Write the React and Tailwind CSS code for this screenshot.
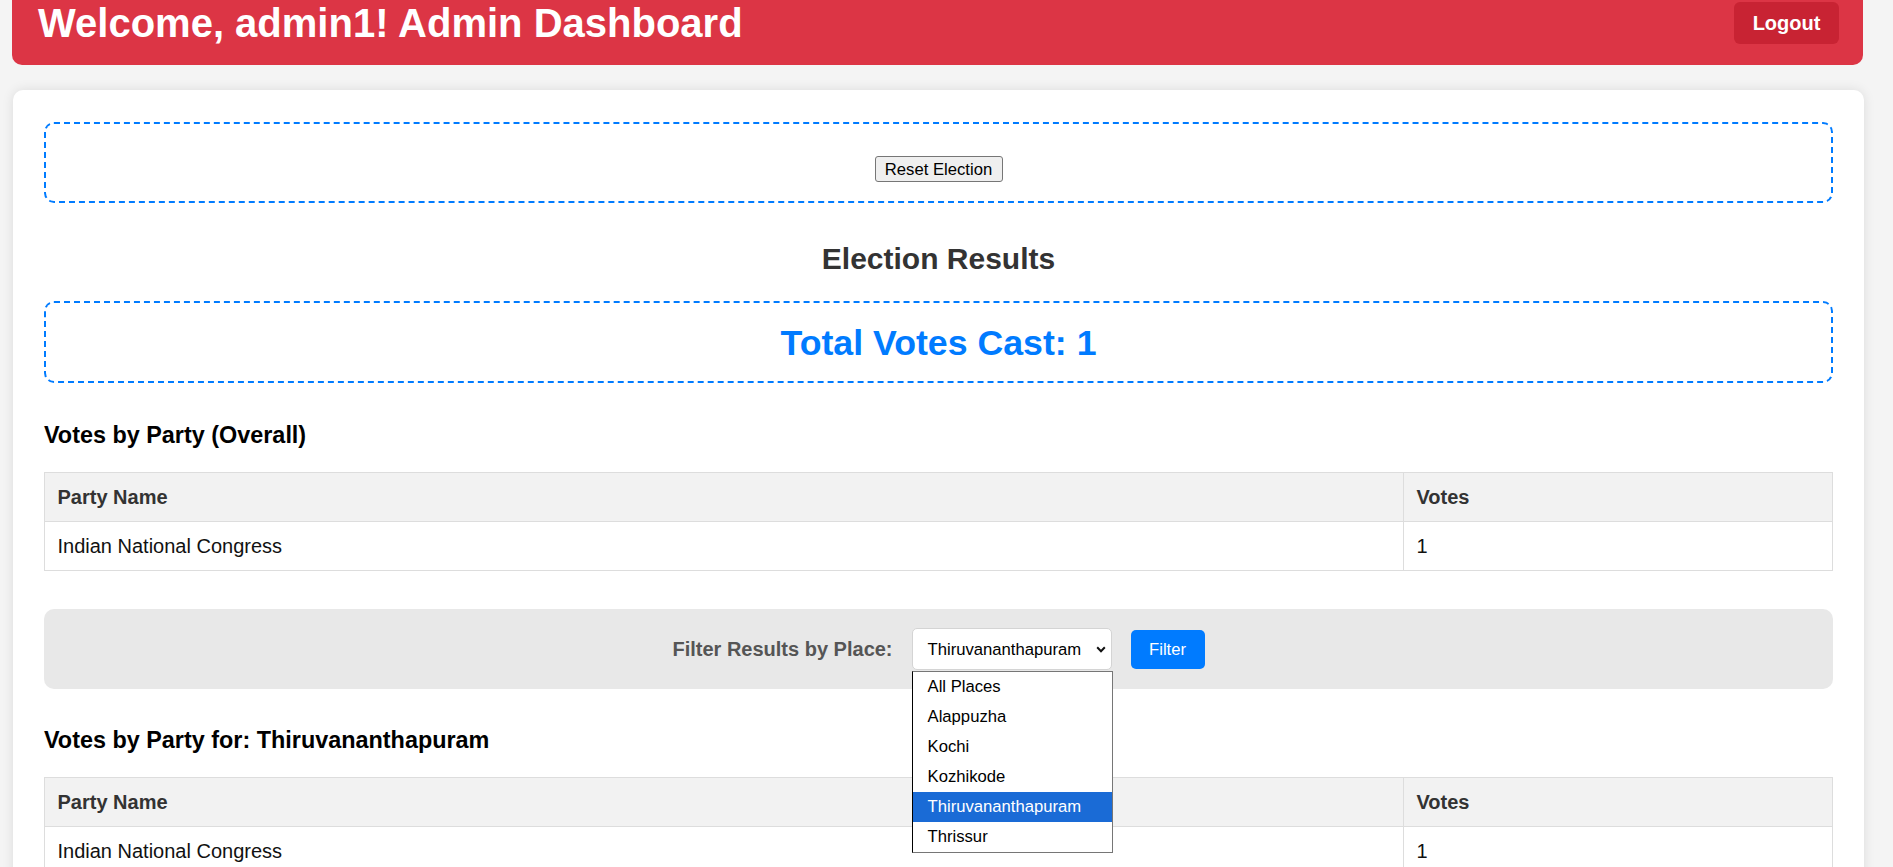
import { useState } from 'react'

const places = ['All Places', 'Alappuzha', 'Kochi', 'Kozhikode', 'Thiruvananthapuram', 'Thrissur']

const overall = [{ party: 'Indian National Congress', votes: 1 }]

function ResultsTable({ rows }) {
  return (
    <table className="w-full table-fixed border-collapse text-[20px] leading-[23px]">
      <colgroup>
        <col className="w-[1359px]" />
        <col />
      </colgroup>
      <thead>
        <tr className="bg-[#f2f2f2]">
          <th className="border border-[#ddd] px-[12.5px] py-[12.5px] text-left font-bold text-[#333]">Party Name</th>
          <th className="border border-[#ddd] px-[12.5px] py-[12.5px] text-left font-bold text-[#333]">Votes</th>
        </tr>
      </thead>
      <tbody>
        {rows.map((r) => (
          <tr key={r.party}>
            <td className="border border-[#ddd] px-[12.5px] py-[12.5px] text-[#111]">{r.party}</td>
            <td className="border border-[#ddd] px-[12.5px] py-[12.5px] text-[#111]">{r.votes}</td>
          </tr>
        ))}
      </tbody>
    </table>
  )
}

function PlaceSelect({ value, onChange }) {
  const [open, setOpen] = useState(true)

  return (
    <div className="relative">
      <div
        onClick={() => setOpen(!open)}
        className="flex h-[42px] w-[200px] cursor-default items-center justify-between rounded-[5px] border border-[#d4d4d4] bg-white pl-[15px] pr-[5px] text-[16.67px] text-black"
      >
        <span>{value}</span>
        <svg width="10" height="7" viewBox="0 0 10 7" fill="none">
          <path d="M1.2 1.3 5 5.2 8.8 1.3" stroke="#111" strokeWidth="2" />
        </svg>
      </div>
      {open && (
        <ul className="absolute left-0 top-[43px] z-10 w-[201px] border border-[#767676] border-l-black bg-white text-[16.67px] leading-[30px]">
          {places.map((p) => (
            <li
              key={p}
              onClick={() => { onChange(p); setOpen(false) }}
              className={p === value ? 'bg-[#1a6bd6] pl-[15px] text-white' : 'pl-[15px] text-black'}
            >
              {p}
            </li>
          ))}
        </ul>
      )}
    </div>
  )
}

export default function App() {
  const [place, setPlace] = useState('Thiruvananthapuram')

  return (
    <div className="h-[867px] overflow-hidden bg-[#f4f4f4] font-['Liberation_Sans',Arial,sans-serif]">
      <header className="ml-[12px] flex w-[1851px] items-center justify-between rounded-b-[10px] bg-[#dc3545] pb-[19px] pl-[26px] pr-[24px]">
        <h1 className="text-[40px] font-bold leading-[46px] text-white">Welcome, admin1! Admin Dashboard</h1>
        <button className="h-[42px] w-[105px] rounded-[6px] bg-[#c82333] text-[20px] font-bold text-white">Logout</button>
      </header>

      <main className="ml-[13px] mt-[25px] w-[1851px] rounded-[10px] bg-white px-[31px] pb-[40px] pt-[32px] shadow-[0_0_12px_rgba(0,0,0,0.1)]">
        <div className="flex justify-center rounded-[10px] border-2 border-dashed border-[#007bff] pb-[19px] pt-[32px]">
          <button className="h-[26px] w-[128px] rounded-[3px] border border-[#767676] bg-[#efefef] text-[16.67px] text-black">
            Reset Election
          </button>
        </div>

        <h2 className="mt-[38px] text-center text-[30px] font-bold leading-[35px] text-[#333]">Election Results</h2>

        <div className="mt-[25px] rounded-[10px] border-2 border-dashed border-[#007bff] pb-[18px] pt-[20px]">
          <h3 className="text-center text-[35.7px] font-bold leading-[40px] text-[#007bff]">Total Votes Cast: 1</h3>
        </div>

        <h3 className="mt-[39px] text-[23.4px] font-bold leading-[27px] text-black">Votes by Party (Overall)</h3>
        <div className="mt-[23px]">
          <ResultsTable rows={overall} />
        </div>

        <div className="mt-[38px] flex h-[80px] items-center justify-center gap-[19px] rounded-[10px] bg-[#e8e8e8]">
          <label className="text-[20px] font-bold text-[#555]">Filter Results by Place:</label>
          <PlaceSelect value={place} onChange={setPlace} />
          <button className="h-[39px] w-[74px] rounded-[5px] bg-[#007bff] text-[16.67px] text-white">Filter</button>
        </div>

        <h3 className="mt-[38px] text-[23.4px] font-bold leading-[27px] text-black">Votes by Party for: {place}</h3>
        <div className="mt-[23px]">
          <ResultsTable rows={overall} />
        </div>
      </main>
    </div>
  )
}
